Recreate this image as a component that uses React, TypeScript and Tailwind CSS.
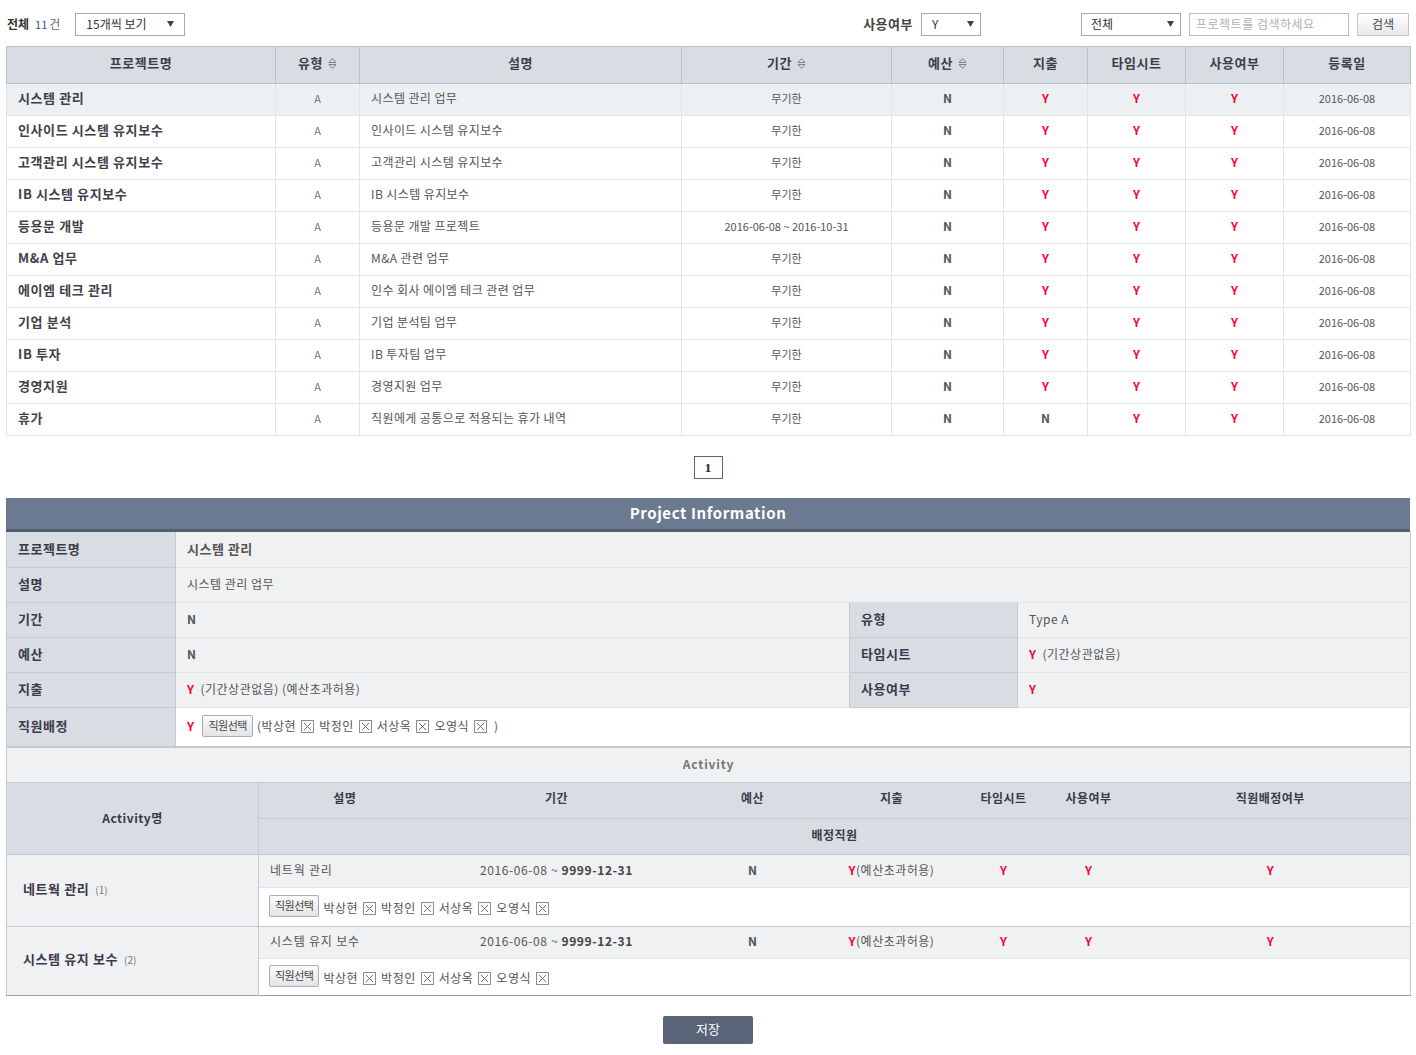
import React from "react";

const FONT = { fontFamily: '"Noto Sans CJK KR", "Noto Sans", sans-serif' };

type Row = { name: string; desc: string; period: string; budget: string; spend: string };

const rows: Row[] = [
  { name: "시스템 관리", desc: "시스템 관리 업무", period: "무기한", budget: "N", spend: "Y" },
  { name: "인사이드 시스템 유지보수", desc: "인사이드 시스템 유지보수", period: "무기한", budget: "N", spend: "Y" },
  { name: "고객관리 시스템 유지보수", desc: "고객관리 시스템 유지보수", period: "무기한", budget: "N", spend: "Y" },
  { name: "IB 시스템 유지보수", desc: "IB 시스템 유지보수", period: "무기한", budget: "N", spend: "Y" },
  { name: "등용문 개발", desc: "등용문 개발 프로젝트", period: "2016-06-08 ~ 2016-10-31", budget: "N", spend: "Y" },
  { name: "M&A 업무", desc: "M&A 관련 업무", period: "무기한", budget: "N", spend: "Y" },
  { name: "에이엠 테크 관리", desc: "인수 회사 에이엠 테크 관련 업무", period: "무기한", budget: "N", spend: "Y" },
  { name: "기업 분석", desc: "기업 분석팀 업무", period: "무기한", budget: "N", spend: "Y" },
  { name: "IB 투자", desc: "IB 투자팀 업무", period: "무기한", budget: "N", spend: "Y" },
  { name: "경영지원", desc: "경영지원 업무", period: "무기한", budget: "N", spend: "Y" },
  { name: "휴가", desc: "직원에게 공통으로 적용되는 휴가 내역", period: "무기한", budget: "N", spend: "N" },
];

const staff = ["박상현", "박정인", "서상옥", "오영식"];

function SortIcon() {
  return (
    <svg width="9" height="13" viewBox="0 0 9 13" className="inline-block ml-[5px] align-[-2px]" aria-hidden>
      <path d="M1 5.5 L4.5 1.5 L8 5.5 Z" fill="none" stroke="#7c828c" strokeWidth="1" />
      <path d="M1 7.5 L4.5 11.5 L8 7.5 Z" fill="none" stroke="#7c828c" strokeWidth="1" />
    </svg>
  );
}

function XBox() {
  return (
    <svg width="13" height="13" viewBox="0 0 13 13" className="inline-block mx-[5px] align-[-2px]" aria-hidden>
      <rect x="0.5" y="0.5" width="12" height="12" fill="#fff" stroke="#8d8d8d" />
      <path d="M3 3 L10 10 M10 3 L3 10" stroke="#6d6d6d" strokeWidth="1" />
    </svg>
  );
}

function Caret() {
  return (
    <svg width="7" height="6" viewBox="0 0 7 6" aria-hidden>
      <path d="M0 0 H7 L3.5 6 Z" fill="#444" />
    </svg>
  );
}

function Y() {
  return <span className="font-bold text-[#ff0033]">Y</span>;
}

function PickButton() {
  return (
    <button className="h-[22px] px-[5px] pb-[1px] text-[11px] leading-none text-[#444] border border-[#a9adb3] rounded-[2px] bg-gradient-to-b from-[#fbfbfb] to-[#e2e4e7] tracking-[-0.5px]">
      직원선택
    </button>
  );
}

function StaffList() {
  return (
    <span className="text-[12px] text-[#555] tracking-[0.5px]">
      {staff.map((s) => (
        <span key={s}>
          {s}
          <XBox />
        </span>
      ))}
    </span>
  );
}

export default function App() {
  const th = "border border-[#bac1cc] text-[13px] font-bold text-[#3d3d4a] h-[37px] pb-[4px] text-center tracking-[0.5px]";
  const td = "border-x border-[#e2e4e7] border-b border-b-[#e2e4e7] h-[32px] pb-[3px]";
  const label =
    "bg-[#d8dde4] border-b border-[#c4c9d2] border-r border-r-[#c4c9d2] pl-[11px] pb-[2px] text-[13px] font-bold text-[#3a3a48] tracking-[0.5px]";
  const val = "border-b border-[#e0e2e6] pl-[11px] pb-[2px] text-[12px] text-[#555] tracking-[0.5px]";
  const ab = "text-center border-b border-[#e2e4e7] pb-[2px]";

  return (
    <div className="w-[1416px] bg-white pb-[10px]" style={FONT}>
      {/* toolbar */}
      <div className="flex items-center h-[46px] px-[7px] pt-[2px]">
        <span className="text-[12px] font-bold text-[#333] pb-[1px]">전체</span>
        <span className="ml-[6px] text-[11px] text-[#3a4d8f]">11</span>
        <span className="ml-[2px] text-[12px] text-[#666]">건</span>
        <div className="ml-[15px] w-[110px] h-[23px] border border-[#aaa] flex items-center justify-between px-[10px] text-[12px] text-[#333]">
          <span>15개씩 보기</span>
          <Caret />
        </div>
        <div className="flex-1" />
        <span className="text-[13px] font-bold text-[#444] tracking-[0.5px]">사용여부</span>
        <div className="ml-[8px] w-[60px] h-[23px] border border-[#aaa] flex items-center justify-between pl-[10px] pr-[6px] text-[12px] text-[#333]">
          <span>Y</span>
          <Caret />
        </div>
        <div className="ml-[100px] w-[100px] h-[23px] border border-[#aaa] flex items-center justify-between pl-[9px] pr-[6px] text-[12px] text-[#333]">
          <span>전체</span>
          <Caret />
        </div>
        <div className="ml-[8px] w-[160px] h-[23px] border border-[#bbb] flex items-center px-[6px] text-[12px] text-[#b0b0b0] tracking-[0.5px]">
          프로젝트를 검색하세요
        </div>
        <button className="ml-[8px] w-[52px] h-[23px] border border-[#c6c6c6] bg-gradient-to-b from-[#ffffff] to-[#e8e8e8] text-[12px] text-[#444]">
          검색
        </button>
      </div>

      {/* main table */}
      <div className="px-[6px]">
        <table className="w-[1404px] border-collapse table-fixed border-b border-b-[#9aa0a8]">
          <colgroup>
            <col className="w-[269px]" />
            <col className="w-[84px]" />
            <col className="w-[322px]" />
            <col className="w-[210px]" />
            <col className="w-[112px]" />
            <col className="w-[84px]" />
            <col className="w-[98px]" />
            <col className="w-[98px]" />
            <col className="w-[127px]" />
          </colgroup>
          <thead className="bg-[#d8dde4]">
            <tr>
              <th className={th}>프로젝트명</th>
              <th className={th}>
                유형
                <SortIcon />
              </th>
              <th className={th}>설명</th>
              <th className={th}>
                기간
                <SortIcon />
              </th>
              <th className={th}>
                예산
                <SortIcon />
              </th>
              <th className={th}>지출</th>
              <th className={th}>타임시트</th>
              <th className={th}>사용여부</th>
              <th className={th}>등록일</th>
            </tr>
          </thead>
          <tbody>
            {rows.map((r, i) => (
              <tr key={r.name} className={i === 0 ? "bg-[#edf0f2]" : "bg-white"}>
                <td className={`${td} pl-[11px] text-[13px] font-bold text-[#3f3f4c] tracking-[0.6px]`}>{r.name}</td>
                <td className={`${td} text-center text-[11px] text-[#777]`}>A</td>
                <td className={`${td} pl-[11px] text-[12px] text-[#555] tracking-[0.4px]`}>{r.desc}</td>
                <td className={`${td} text-center text-[11px] text-[#555]`}>{r.period}</td>
                <td className={`${td} text-center text-[12px] font-bold text-[#555]`}>{r.budget}</td>
                <td className={`${td} text-center text-[12px]`}>
                  {r.spend === "Y" ? <Y /> : <span className="font-bold text-[#555]">N</span>}
                </td>
                <td className={`${td} text-center text-[12px]`}>
                  <Y />
                </td>
                <td className={`${td} text-center text-[12px]`}>
                  <Y />
                </td>
                <td className={`${td} text-center text-[11px] text-[#555]`}>2016-06-08</td>
              </tr>
            ))}
          </tbody>
        </table>
      </div>

      {/* pagination */}
      <div className="flex justify-center mt-[20px] h-[23px]">
        <span
          className="w-[29px] h-[23px] border border-[#5b6577] flex items-center justify-center text-[13px] font-bold text-[#222]"
          style={{ fontFamily: '"Liberation Serif", serif' }}
        >
          1
        </span>
      </div>

      {/* project information */}
      <div className="px-[6px] mt-[19px]">
        <div className="h-[34px] bg-[#6b7a90] border-b-[3px] border-b-[#525d70] flex items-center justify-center text-[15px] font-bold text-white tracking-[0.6px]">
          Project Information
        </div>
        <table className="w-[1404px] border-collapse table-fixed border-x border-[#c4c9d2]">
          <colgroup>
            <col className="w-[169px]" />
            <col className="w-[674px]" />
            <col className="w-[168px]" />
            <col className="w-[393px]" />
          </colgroup>
          <tbody className="bg-[#f0f1f3]">
            <tr className="h-[35px]">
              <td className={label}>프로젝트명</td>
              <td className={`${val} text-[13px] font-bold text-[#444]`} colSpan={3}>
                시스템 관리
              </td>
            </tr>
            <tr className="h-[35px]">
              <td className={label}>설명</td>
              <td className={val} colSpan={3}>
                시스템 관리 업무
              </td>
            </tr>
            <tr className="h-[35px]">
              <td className={label}>기간</td>
              <td className={`${val} font-bold`}>N</td>
              <td className={`${label} border-l border-l-[#c4c9d2]`}>유형</td>
              <td className={val}>Type A</td>
            </tr>
            <tr className="h-[35px]">
              <td className={label}>예산</td>
              <td className={`${val} font-bold`}>N</td>
              <td className={`${label} border-l border-l-[#c4c9d2]`}>타임시트</td>
              <td className={val}>
                <Y />
                <span className="ml-[6px]">(기간상관없음)</span>
              </td>
            </tr>
            <tr className="h-[35px]">
              <td className={label}>지출</td>
              <td className={val}>
                <Y />
                <span className="ml-[6px]">(기간상관없음) (예산초과허용)</span>
              </td>
              <td className={`${label} border-l border-l-[#c4c9d2]`}>사용여부</td>
              <td className={val}>
                <Y />
              </td>
            </tr>
            <tr className="h-[39px]">
              <td className={label}>직원배정</td>
              <td className={`${val} bg-white border-b-[#c4c9d2]`} colSpan={3}>
                <div className="flex items-center">
                  <Y />
                  <span className="ml-[8px]">
                    <PickButton />
                  </span>
                  <span className="ml-[4px] text-[12px] text-[#555]">(</span>
                  <StaffList />
                  <span className="ml-[2px] text-[12px] text-[#555]">)</span>
                </div>
              </td>
            </tr>
          </tbody>
        </table>

        {/* activity */}
        <table className="w-[1404px] border-collapse table-fixed border border-[#c4c9d2] border-b-[#9aa0a8]">
          <colgroup>
            <col className="w-[252px]" />
            <col className="w-[172px]" />
            <col className="w-[252px]" />
            <col className="w-[140px]" />
            <col className="w-[138px]" />
            <col className="w-[86px]" />
            <col className="w-[84px]" />
            <col className="w-[280px]" />
          </colgroup>
          <tbody>
            <tr className="h-[35px] bg-[#f0f1f3]">
              <td
                colSpan={8}
                className="text-center pb-[2px] text-[12px] font-bold text-[#777] tracking-[0.8px] border-b border-[#c4c9d2]"
              >
                Activity
              </td>
            </tr>
            <tr className="h-[36px] bg-[#d8dde4] text-[12px] font-bold text-[#3a3a48] tracking-[0.5px]">
              <td rowSpan={2} className="text-center border-r border-b border-[#c4c9d2]">
                Activity명
              </td>
              <td className="text-center pb-[4px] border-b border-[#c4c9d2]">설명</td>
              <td className="text-center pb-[4px] border-b border-[#c4c9d2]">기간</td>
              <td className="text-center pb-[4px] border-b border-[#c4c9d2]">예산</td>
              <td className="text-center pb-[4px] border-b border-[#c4c9d2]">지출</td>
              <td className="text-center pb-[4px] border-b border-[#c4c9d2]">타임시트</td>
              <td className="text-center pb-[4px] border-b border-[#c4c9d2]">사용여부</td>
              <td className="text-center pb-[4px] border-b border-[#c4c9d2]">직원배정여부</td>
            </tr>
            <tr className="h-[36px] bg-[#d8dde4] text-[12px] font-bold text-[#3a3a48] tracking-[0.5px]">
              <td colSpan={7} className="text-center pb-[3px] border-b border-[#c4c9d2]">
                배정직원
              </td>
            </tr>
            {[
              { name: "네트웍 관리", n: 1, desc: "네트웍 관리" },
              { name: "시스템 유지 보수", n: 2, desc: "시스템 유지 보수" },
            ].map((a, i) => (
              <React.Fragment key={a.name}>
                <tr className={`${i === 0 ? "h-[33px]" : "h-[32px]"} bg-[#f0f1f3] text-[12px] text-[#555]`}>
                  <td
                    rowSpan={2}
                    className={`pl-[16px] pb-[3px] bg-[#f0f1f3] border-r border-[#c4c9d2] ${i === 0 ? "border-b border-b-[#c4c9d2]" : ""}`}
                  >
                    <span className="text-[13px] font-bold text-[#3a3a48] tracking-[0.6px]">{a.name}</span>
                    <span className="ml-[6px] text-[10px] text-[#777]">({a.n})</span>
                  </td>
                  <td className="pl-[11px] pb-[2px] border-b border-[#e2e4e7] tracking-[0.8px]">{a.desc}</td>
                  <td className={`${ab} tracking-[0.6px]`}>
                    2016-06-08 ~ <span className="font-bold text-[#444]">9999-12-31</span>
                  </td>
                  <td className={`${ab} font-bold`}>N</td>
                  <td className={`${ab} tracking-[0.5px]`}>
                    <Y />
                    (예산초과허용)
                  </td>
                  <td className={ab}>
                    <Y />
                  </td>
                  <td className={ab}>
                    <Y />
                  </td>
                  <td className={ab}>
                    <Y />
                  </td>
                </tr>
                <tr className={`${i === 0 ? "h-[39px]" : "h-[37px]"} bg-white`}>
                  <td colSpan={7} className={`pl-[10px] pb-[1px] ${i === 0 ? "border-b border-[#c4c9d2]" : ""}`}>
                    <div className="flex items-center">
                      <PickButton />
                      <span className="ml-[4px]">
                        <StaffList />
                      </span>
                    </div>
                  </td>
                </tr>
              </React.Fragment>
            ))}
          </tbody>
        </table>
      </div>

      {/* save */}
      <div className="flex justify-center mt-[20px]">
        <button className="w-[90px] h-[28px] pb-[2px] bg-[#5a6479] rounded-[2px] text-[13px] text-white">저장</button>
      </div>
    </div>
  );
}
